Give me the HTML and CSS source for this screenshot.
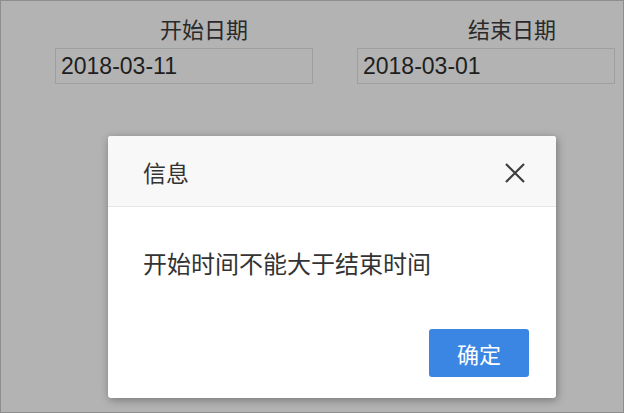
FILE: index.html
```html
<!DOCTYPE html>
<html lang="zh-CN">
<head>
<meta charset="utf-8">
<title>日期校验</title>
<link rel="stylesheet" href="styles.css">
</head>
<body>
<div class="page">
  <div class="fields">
    <div class="field">
      <div class="label label-start">开始日期</div>
      <div class="input">2018-03-11</div>
    </div>
    <div class="field">
      <div class="label label-end">结束日期</div>
      <div class="input">2018-03-01</div>
    </div>
  </div>
  <div class="dialog">
    <div class="dialog-head">
      <span class="dialog-title">信息</span>
      <svg class="close" width="22" height="20" viewBox="0 0 22 20"><path d="M2 1 L20 19 M20 1 L2 19" stroke="#3d3d3d" stroke-width="2.2" fill="none"/></svg>
    </div>
    <div class="dialog-body">开始时间不能大于结束时间</div>
    <div class="dialog-foot">
      <button class="btn">确定</button>
    </div>
  </div>
</div>
</body>
</html>
```
FILE: styles.css
```css
html, body {
  margin: 0;
  padding: 0;
}
body {
  font-family: "Noto Sans CJK SC", "Liberation Sans", sans-serif;
  color: #2e2e2e;
}
.page {
  position: relative;
  width: 624px;
  height: 413px;
  box-sizing: border-box;
  border: 1px solid #8e8e8e;
  background: #b3b3b3;
  overflow: hidden;
}
.fields {
  display: flex;
  gap: 44px;
  padding: 12px 0 0 54px;
}
.field {
  display: flex;
  flex-direction: column;
}
.label {
  font-size: 22px;
  line-height: 30px;
  color: #2a2a2a;
}
.label-start { padding-left: 105px; }
.label-end { padding-left: 111px; }
.input {
  margin-top: 5px;
  width: 258px;
  height: 36px;
  box-sizing: border-box;
  border: 1px solid #9f9f9f;
  padding-left: 5px;
  font-family: "Liberation Sans", Arial, sans-serif;
  font-size: 23px;
  line-height: 34px;
  color: #1e1e1e;
}
.dialog {
  position: absolute;
  left: 107px;
  top: 135px;
  width: 448px;
  height: 262px;
  background: #fff;
  border-radius: 3px;
  box-shadow: 1px 2px 8px rgba(0, 0, 0, 0.35);
  display: flex;
  flex-direction: column;
  overflow: hidden;
}
.dialog-head {
  height: 70px;
  background: #f8f8f8;
  border-bottom: 1px solid #e6e6e6;
  display: flex;
  align-items: center;
  justify-content: space-between;
  padding: 0 30px 0 35px;
}
.dialog-title {
  font-size: 23px;
  color: #333;
  padding-top: 2px;
}
.close {
  display: block;
  margin-top: 4px;
}
.dialog-body {
  flex: 1;
  padding: 38px 0 0 35px;
  font-size: 24px;
  line-height: 36px;
  color: #333;
}
.dialog-foot {
  display: flex;
  justify-content: flex-end;
  padding: 0 27px 21px 0;
}
.btn {
  width: 100px;
  height: 48px;
  border: none;
  border-radius: 3px;
  background: #3b86e2;
  color: #fff;
  font-family: "Noto Sans CJK SC", sans-serif;
  font-size: 22px;
  padding: 0;
}
```
